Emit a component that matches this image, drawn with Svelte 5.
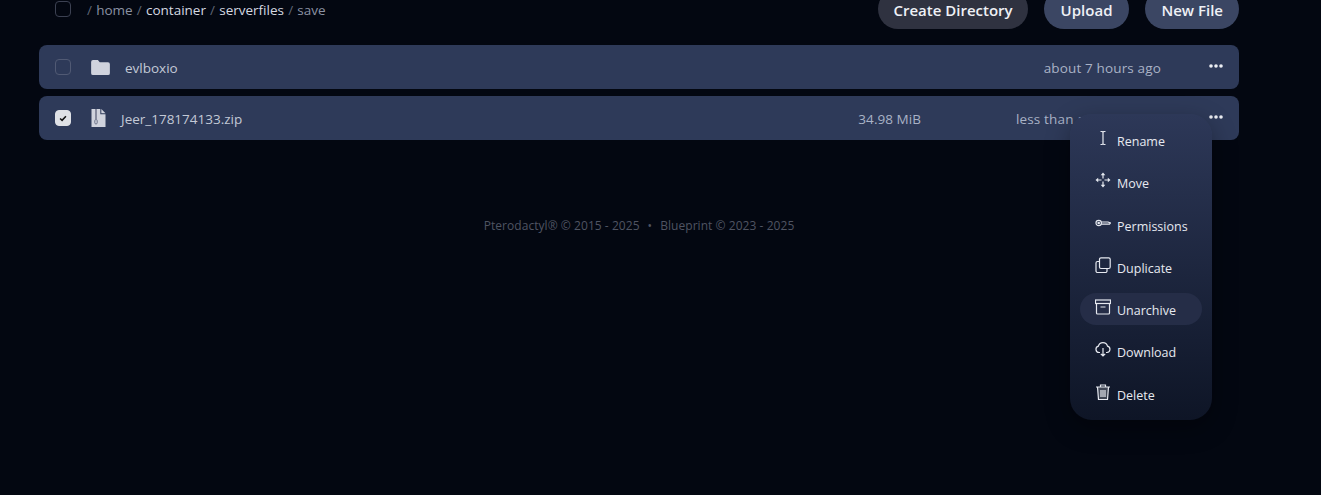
<script>
  const crumbs = [
    { name: "home", link: false },
    { name: "container", link: true },
    { name: "serverfiles", link: true },
    { name: "save", link: false },
  ];
</script>

<div class="page">
  <div class="toolbar">
    <span class="check top"></span>
    <div class="crumbs">
      {#each crumbs as c}
        <span class="sep">/</span>
        <span class:link={c.link}>{c.name}</span>
      {/each}
    </div>
    <div class="actions">
      <button class="btn dark">Create Directory</button>
      <button class="btn wide">Upload</button>
      <button class="btn">New File</button>
    </div>
  </div>

  <div class="row">
    <span class="check"></span>
    <svg class="ficon folder" viewBox="0 0 20 16" fill="currentColor"><path d="M2 0h5.200l2 2.400H18a2 2 0 0 1 2 2V14a2 2 0 0 1-2 2H2a2 2 0 0 1-2-2V2a2 2 0 0 1 2-2z" /></svg>
    <span class="name">evlboxio</span>
    <span class="time t1">about 7 hours ago</span>
    <svg class="dots" viewBox="0 0 14 4" fill="currentColor"><circle cx="2" cy="2" r="1.800" /><circle cx="7" cy="2" r="1.800" /><circle cx="12" cy="2" r="1.800" /></svg>
  </div>

  <div class="row second">
    <span class="check on">
      <svg viewBox="0 0 12 12" fill="none" stroke="#111" stroke-width="1.800"><path d="M2.500 6.500l2.400 2.300 4.600-5" /></svg>
    </span>
    <svg class="ficon zip" viewBox="0 0 14 18">
      <path fill="currentColor" d="M0 0h8.800v5.200H14V18H0z" />
      <path fill="currentColor" d="M9.800 0L14 4.200H9.800z" />
      <path fill="none" stroke="#6d7388" stroke-width="1.300" d="M3.500 1h2M3.500 3h2M3.500 5h2M3.500 7h2M3.500 9h2" />
      <rect x="3.300" y="10.500" width="2.400" height="4.500" rx="1.200" fill="none" stroke="#6d7388" />
    </svg>
    <span class="name">Jeer_178174133.zip</span>
    <span class="size">34.98 MiB</span>
    <span class="time t2">less than a minute ago</span>
    <svg class="dots" viewBox="0 0 14 4" fill="currentColor"><circle cx="2" cy="2" r="1.800" /><circle cx="7" cy="2" r="1.800" /><circle cx="12" cy="2" r="1.800" /></svg>

    <div class="menu">
      <div class="item">
        <svg viewBox="0 0 16 16"><path d="M5.500 1.500H7.200L8 2.300l.8-.8h1.700M5.500 14.500h1.700l.8-.8.8.8h1.700M8 2.300v11.400" /></svg>
        <span>Rename</span>
      </div>
      <div class="item">
        <svg viewBox="0 0 16 16"><path d="M8 3v3.500M8 9.500V13M3 8h3.500M9.500 8H13" /><path class="solid" d="M8 .5l2.300 2.700H5.700zM8 15.500l2.300-2.700H5.700zM.5 8l2.700-2.300v4.600zM15.500 8l-2.700-2.300v4.600z" /></svg>
        <span>Move</span>
      </div>
      <div class="item">
        <svg viewBox="0 0 16 16"><circle cx="3.700" cy="8" r="2.700" /><circle cx="3.700" cy="8" r="0.700" /><path d="M6.400 7H13l2.500 1-1 1.200H6.300" /></svg>
        <span>Permissions</span>
      </div>
      <div class="item">
        <svg viewBox="0 0 16 16"><rect x="4.500" y="0.800" width="10.700" height="10.700" rx="1.500" /><path d="M4.500 4.500H2.500A1.500 1.500 0 0 0 1 6v8a1.500 1.500 0 0 0 1.500 1.500h8A1.500 1.500 0 0 0 12 14v-2.500" /></svg>
        <span>Duplicate</span>
      </div>
      <div class="item active">
        <svg viewBox="0 0 16 16"><rect x="0.500" y="1" width="15" height="3.500" /><path d="M1.500 4.500V14a1 1 0 0 0 1 1h11a1 1 0 0 0 1-1V4.500M5.500 8h5" /></svg>
        <span>Unarchive</span>
      </div>
      <div class="item">
        <svg viewBox="0 0 16 16"><path d="M5 11.500H4A3.200 3.200 0 0 1 3.400 5.200 4.700 4.700 0 0 1 12.500 5.200 3.200 3.200 0 0 1 12 11.500h-1M8 7v8M5.800 12.800L8 15l2.200-2.200" /></svg>
        <span>Download</span>
      </div>
      <div class="item">
        <svg viewBox="0 0 16 16"><path class="tint" d="M2.500 3l1 12.500h9L13.500 3z" /><path d="M1 3h14M5.500 3V1h5v2M2.500 3l1 12.500h9L13.500 3M6 6v7M8 6v7M10 6v7" /></svg>
        <span>Delete</span>
      </div>
    </div>
  </div>

  <p class="footer">Pterodactyl® © 2015 - 2025<span class="dot">•</span>Blueprint © 2023 - 2025</p>
</div>

<style>
  :global(body) {
    background: #030711;
  }

  .page {
    width: 1200px;
    min-height: calc(100vh + 11px);
    margin: -11px 0 0 39px;
    font-family: "Open Sans", "Noto Sans", sans-serif;
    font-size: 13.500px;
    color: #a9b2c6;
  }

  .toolbar {
    display: flex;
    align-items: center;
    height: 40px;
    padding-left: 16px;
    margin-bottom: 16px;
  }

  .crumbs {
    display: flex;
    gap: 4.200px;
    margin-left: 16px;
    padding-top: 2px;
    color: #8b92a3;
  }

  .crumbs .sep {
    color: #5f6675;
  }

  .crumbs .link {
    color: #d5d9e2;
  }

  .actions {
    display: flex;
    gap: 16px;
    margin-left: auto;
  }

  .btn {
    height: 40px;
    padding: 1px 16px 0;
    border: none;
    border-radius: 20px;
    background: #3b4663;
    color: #eef0f5;
    font: 600 15px "Open Sans", sans-serif;
  }

  .btn.wide {
    padding: 1px 17px 0;
  }

  .btn.dark {
    padding: 1px 15px 0;
    background: #2f3240;
  }

  .check {
    display: flex;
    align-items: center;
    justify-content: center;
    flex: none;
    box-sizing: border-box;
    width: 16px;
    height: 16px;
    border: 1px solid #515a74;
    border-radius: 4px;
  }

  .check.top {
    border-color: #3c4152;
  }

  .check.on {
    background: #dfe1e6;
    border-color: #dfe1e6;
  }

  .check.on svg {
    width: 10px;
    height: 10px;
  }

  .row {
    position: relative;
    display: flex;
    align-items: center;
    height: 44px;
    padding-left: 16px;
    border-radius: 8px;
    background: #2e3a59;
  }

  .row.second {
    margin-top: 7px;
  }

  .ficon {
    flex: none;
    color: #d0d3dd;
  }

  .folder {
    width: 19px;
    height: 15px;
    margin-left: 20px;
  }

  .zip {
    width: 15px;
    height: 18px;
    margin-left: 20px;
  }

  .name {
    margin-left: 15px;
    padding-top: 2px;
    color: #c3c9d6;
  }

  .size {
    position: absolute;
    right: 318px;
    padding-top: 2px;
    letter-spacing: 0.05px;
  }

  .time {
    position: absolute;
    padding-top: 2px;
    letter-spacing: 0.15px;
  }

  .t1 {
    right: 78px;
  }

  .t2 {
    left: 977px;
    white-space: nowrap;
  }

  .dots {
    position: absolute;
    right: 16px;
    top: 19px;
    width: 14px;
    height: 4px;
    color: #eceef3;
  }

  .menu {
    position: absolute;
    z-index: 2;
    top: 18px;
    left: 1031px;
    display: flex;
    flex-direction: column;
    gap: 10.300px;
    box-sizing: border-box;
    width: 142px;
    height: 306px;
    padding: 9.500px 10px 0;
    border-radius: 22px;
    background: linear-gradient(180deg, #2d3858 0%, #0e1526 100%);
    box-shadow: 0 8px 24px rgba(0, 0, 0, 0.35);
  }

  .item {
    display: flex;
    flex: none;
    align-items: center;
    gap: 6px;
    height: 32px;
    padding-left: 15px;
    border-radius: 16px;
    color: #e6e9f0;
    font-size: 12.500px;
  }

  .item span {
    padding-top: 4px;
  }

  .item.active {
    background: #252d47;
  }

  .item svg {
    width: 16px;
    height: 16px;
    margin-top: -3px;
    fill: none;
    stroke: currentColor;
    stroke-width: 1.200;
  }

  .item svg .solid {
    fill: currentColor;
    stroke: none;
  }

  .item svg .tint {
    fill: rgba(255, 255, 255, 0.2);
    stroke: none;
  }

  .footer {
    margin: 77px 0 0;
    width: 1200px;
    text-align: center;
    font-size: 12px;
    letter-spacing: 0.05px;
    color: #4f5462;
  }

  .dot {
    margin: 0 8px;
  }
</style>
